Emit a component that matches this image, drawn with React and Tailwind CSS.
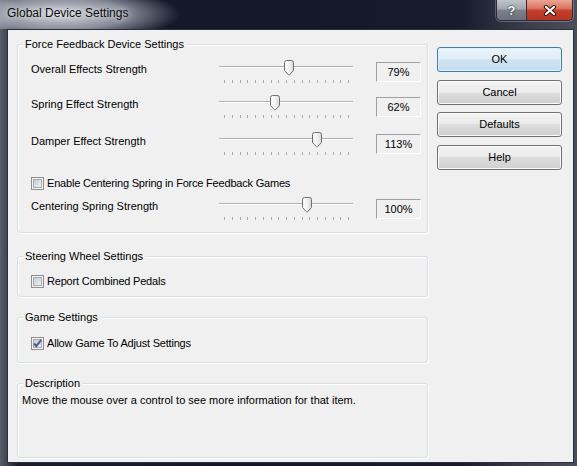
import React from "react"

const rows = [
  { label: "Overall Effects Strength", value: 79 },
  { label: "Spring Effect Strength", value: 62 },
  { label: "Damper Effect Strength", value: 113 },
]

// slider drawing: track, 17 ticks, pointed thumb
function Slider({ value }) {
  const x = Math.round(5 + (value / 150) * 124)
  const ticks = Array.from({ length: 17 }, (_, i) => Math.round(5 + i * 7.75))
  return (
    <svg width="134" height="26" viewBox="0 0 134 26" className="shrink-0 block">
      <defs>
        <linearGradient id="thumbFill" x1="0" y1="0" x2="1" y2="0">
          <stop offset="0" stopColor="#ffffff" />
          <stop offset="0.5" stopColor="#f3f3f3" />
          <stop offset="1" stopColor="#d6d6d6" />
        </linearGradient>
      </defs>
      <rect x="0" y="6" width="134" height="1" fill="#b0b0b0" />
      <rect x="0" y="7" width="134" height="1" fill="#ffffff" />
      {ticks.map((t) => (
        <rect key={t} x={t} y="20" width="1" height="3" fill="#a9a9a9" />
      ))}
      <g transform={`translate(${x - 5},0)`}>
        <path
          d="M0.5 2.5 Q0.5 0.5 2.5 0.5 H7.5 Q9.5 0.5 9.5 2.5 V10.5 L5.5 14.8 Q5 15.3 4.5 14.8 L0.5 10.5 Z"
          fill="url(#thumbFill)"
          stroke="#6f6f6f"
        />
      </g>
    </svg>
  )
}

function Checkbox({ checked }) {
  return (
    <svg width="13" height="13" viewBox="0 0 13 13" className="shrink-0 block">
      <defs>
        <linearGradient id="cbFill" x1="0" y1="0" x2="1" y2="1">
          <stop offset="0" stopColor="#c4c8ce" />
          <stop offset="1" stopColor="#f4f4f4" />
        </linearGradient>
      </defs>
      <rect x="0.5" y="0.5" width="12" height="12" fill="#f4f4f4" stroke="#8e8f8f" />
      <rect x="2.5" y="2.5" width="8" height="8" fill="url(#cbFill)" stroke="#a9adb3" />
      {checked && (
        <path d="M3 6.5 L5.3 9.2 L10.2 2.8" fill="none" stroke="#4a5e8c" strokeWidth="2" />
      )}
    </svg>
  )
}

function Group({ title, className, children }) {
  return (
    <div
      className={`relative w-[411px] border border-[#d5dfe5] rounded-[3px] shadow-[inset_1px_1px_0_#ffffff,1px_1px_0_#ffffff] ${className}`}
    >
      <span className="absolute left-[5px] -top-[7px] px-[2px] bg-[#f0f0f0] leading-[13px]">{title}</span>
      {children}
    </div>
  )
}

function SliderRow({ label, value, className = "" }) {
  return (
    <div className={`flex items-start h-[26px] ${className}`}>
      <div className="w-[188px] pt-[3px] leading-[13px]">{label}</div>
      <Slider value={value} />
      <div className="ml-[23px] mt-[2px] w-[45px] h-[20px] flex items-center justify-center border border-[#a0a0a0] border-r-white border-b-white leading-[13px]">
        {value}%
      </div>
    </div>
  )
}

function CheckRow({ label, checked, className = "" }) {
  return (
    <div className={`flex items-center gap-[3px] h-[14px] ${className}`}>
      <Checkbox checked={checked} />
      <span className="leading-[13px] tracking-[-0.2px]">{label}</span>
    </div>
  )
}

function DialogButton({ children, primary }) {
  return (
    <button
      className={`w-[125px] h-[25px] rounded-[3px] border leading-[13px] text-black ${
        primary
          ? "border-[#3c7fb1] bg-[linear-gradient(#eaf4fa,#e0eef7_50%,#cfe4f2_50%,#c4dcec)] shadow-[inset_0_0_0_1px_#dff0fa]"
          : "border-[#707070] bg-[linear-gradient(#f2f2f2,#ebebeb_50%,#dddddd_50%,#cfcfcf)] shadow-[inset_0_0_0_1px_#fbfbfb]"
      }`}
    >
      {children}
    </button>
  )
}

export default function App() {
  return (
    <div className="w-[577px] h-[466px] flex flex-col overflow-hidden font-['Liberation_Sans',Arial,sans-serif] text-[11px] text-black bg-[linear-gradient(to_right,#5a5e6a,#1a1d2c_3%,#141728_40%,#181b2c_80%,#3c404e_92%,#4a4e5a)]">
      {/* title bar */}
      <div className="h-[29px] shrink-0 flex items-start justify-between bg-[radial-gradient(ellipse_120px_28px_at_60px_14px,rgba(218,220,226,0.97),rgba(176,180,192,0.75)_55%,rgba(40,44,60,0)_100%)]">
        <div className="pl-[7px] pt-[6px] text-[12px] leading-[15px] text-[#0c0c0c] [text-shadow:0_0_6px_#ffffff]">
          Global Device Settings
        </div>
        <div className="mr-[4px] flex rounded-b-[5px] border border-t-0 border-[#2a2d38] overflow-hidden shadow-[0_0_0_1px_rgba(255,255,255,0.25)]">
          <div className="w-[30px] h-[20px] flex items-center justify-center border-r border-[#2a2d38] bg-[linear-gradient(#c0c4cc,#a2a7b0_45%,#7d828c_50%,#6a6f79)]">
            <span className="text-white font-bold text-[13px] leading-[13px] [text-shadow:0_0_2px_#20242e,0_0_1px_#20242e]">?</span>
          </div>
          <div className="w-[45px] h-[20px] flex items-center justify-center bg-[linear-gradient(#e9a696,#d8705c_45%,#c7402a_50%,#b8321f)]">
            <svg width="14" height="11" viewBox="0 0 14 11">
              <path d="M3 2 L11 9 M11 2 L3 9" stroke="#3a1510" strokeWidth="4.2" strokeLinecap="round" />
              <path d="M3 2 L11 9 M11 2 L3 9" stroke="#ffffff" strokeWidth="2.2" strokeLinecap="round" />
            </svg>
          </div>
        </div>
      </div>

      {/* client area */}
      <div className="ml-[7px] mr-[3px] mb-[3px] flex-1 flex border border-[#2b303c] bg-[#f0f0f0]">
        <div className="pl-[9px] pt-[14px] flex flex-col">
          <Group title="Force Feedback Device Settings" className="h-[189px] pl-[13px] pt-[15px]">
            <SliderRow label={rows[0].label} value={rows[0].value} />
            <SliderRow label={rows[1].label} value={rows[1].value} className="mt-[9px]" />
            <SliderRow label={rows[2].label} value={rows[2].value} className="mt-[11px]" />
            <CheckRow label="Enable Centering Spring in Force Feedback Games" className="mt-[18px]" />
            <SliderRow label="Centering Spring Strength" value={100} className="mt-[7px]" />
          </Group>
          <Group title="Steering Wheel Settings" className="mt-[23px] h-[41px] pl-[13px] pt-[17px]">
            <CheckRow label="Report Combined Pedals" />
          </Group>
          <Group title="Game Settings" className="mt-[20px] h-[46px] pl-[13px] pt-[18px]">
            <CheckRow label="Allow Game To Adjust Settings" checked />
          </Group>
          <Group title="Description" className="mt-[20px] h-[75px] pl-[4px] pt-[10px]">
            <p className="leading-[13px]">Move the mouse over a control to see more information for that item.</p>
          </Group>
        </div>
        <div className="ml-[9px] pt-[17px] flex flex-col gap-[7.5px]">
          <DialogButton primary>OK</DialogButton>
          <DialogButton>Cancel</DialogButton>
          <DialogButton>Defaults</DialogButton>
          <DialogButton>Help</DialogButton>
        </div>
      </div>
    </div>
  )
}
